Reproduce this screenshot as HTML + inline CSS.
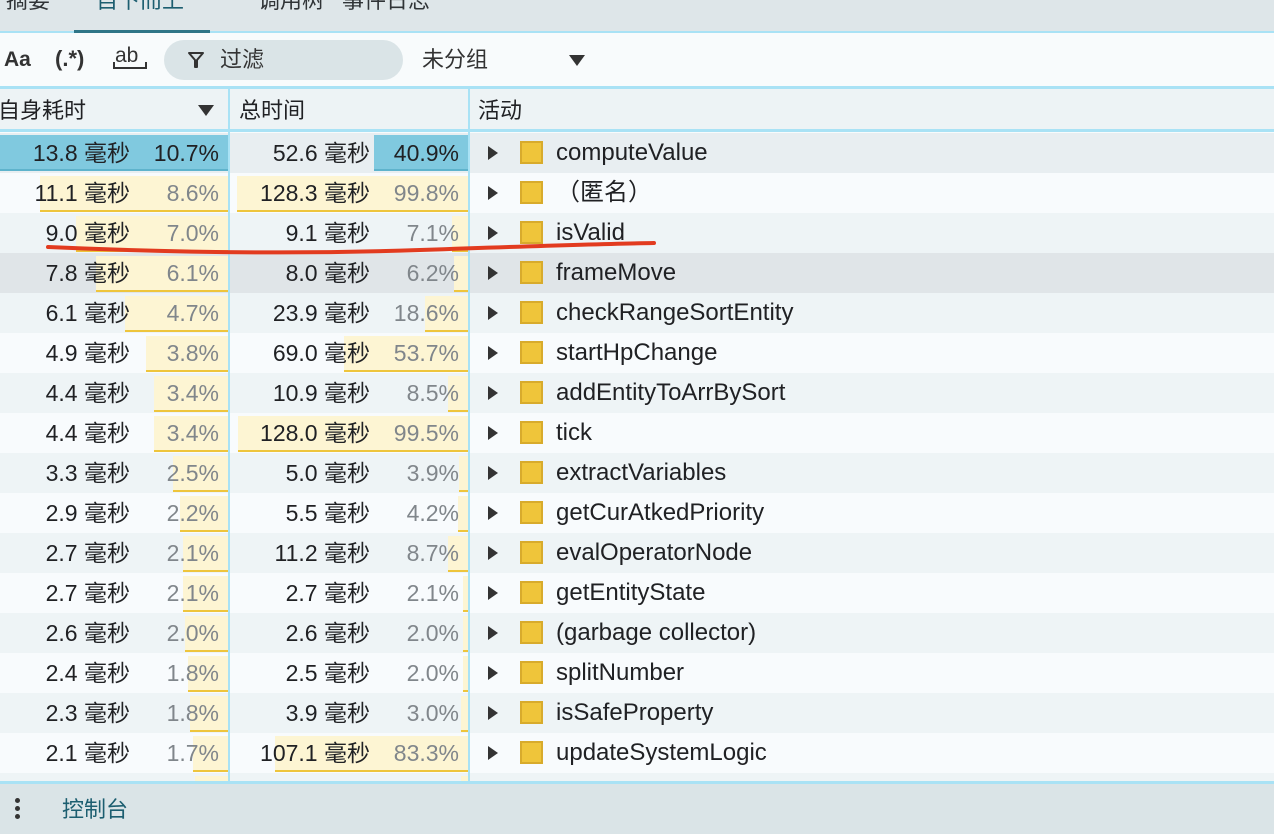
<!DOCTYPE html>
<html><head><meta charset="utf-8"><style>
*{box-sizing:border-box;margin:0;padding:0}
body{width:1274px;height:834px;overflow:hidden;background:#f8fbfc;font-family:"Liberation Sans","Noto Sans CJK SC",sans-serif;color:#202124;position:relative}
.tabs{position:absolute;left:0;top:0;width:1274px;height:33px;background:#dee6e9;border-bottom:2px solid #a9e2f5}
.tab{position:absolute;top:-14px;font-size:22px;line-height:30px;color:#303437}
.tb{position:absolute;top:35px;left:0;width:1274px;height:54px;background:#f8fbfc;border-bottom:3px solid #a9e2f5}
.hd{position:absolute;top:89px;left:0;width:1274px;height:43px;background:#edf3f5;border-bottom:3px solid #a9e2f5;font-size:22px;line-height:24px}
.row{position:absolute;left:0;width:1274px;height:40px;font-size:23px;line-height:24px}
.bar{position:absolute;top:3px;height:36px;background:#fdf5d3;border-bottom:2px solid #eec53c}
.t{position:absolute;top:8px;text-align:right;white-space:nowrap}
.p{color:#80868b}
.vd{position:absolute;top:89px;width:2px;height:692px;background:#a9e2f5}
.tri{position:absolute;left:488px;top:13px;width:0;height:0;border-left:10px solid #333;border-top:7px solid transparent;border-bottom:7px solid transparent}
.sq{position:absolute;left:520px;top:8px;width:23px;height:23px;background:#efc53a;border:2px solid #d8ab2c}
.nm{position:absolute;left:556px;top:8px;white-space:nowrap;font-size:24px}
.bot{position:absolute;left:0;top:781px;width:1274px;height:53px;background:#dae4e7;border-top:3px solid #a9e2f5}
</style></head><body>
<div class="tabs">
<div class="tab" style="left:6px">摘要</div>
<div class="tab" style="left:96px;color:#1c5e70">自下而上</div>
<div class="tab" style="left:258px">调用树</div>
<div class="tab" style="left:342px">事件日志</div>
<div style="position:absolute;left:74px;top:30px;width:136px;height:3px;background:#2f7587"></div>
</div>
<div class="tb">
<div style="position:absolute;left:4px;top:13px;font-size:21px;line-height:24px;font-weight:bold;color:#333">Aa</div>
<div style="position:absolute;left:55px;top:12px;font-size:22px;line-height:24px;font-weight:bold;color:#333">(.*)</div>
<div style="position:absolute;left:115px;top:9px;font-size:21px;line-height:24px;color:#333">ab</div>
<div style="position:absolute;left:113px;top:27px;width:34px;height:7px;border:2px solid #333;border-top:none"></div>
<div style="position:absolute;left:164px;top:5px;width:239px;height:40px;border-radius:20px;background:#dae4e7"></div>
<svg style="position:absolute;left:186px;top:15px" width="20" height="20" viewBox="0 0 20 20"><path d="M3 3H17L11 10V17H9V10Z" fill="none" stroke="#333" stroke-width="2" stroke-linejoin="round"/></svg>
<div style="position:absolute;left:220px;top:13px;font-size:22px;line-height:24px;color:#333">过滤</div>
<div style="position:absolute;left:422px;top:13px;font-size:22px;line-height:24px;color:#333">未分组</div>
<div style="position:absolute;left:569px;top:20px;border-top:11px solid #333;border-left:8px solid transparent;border-right:8px solid transparent"></div>
</div>
<div class="hd">
<div style="position:absolute;left:-2px;top:10px">自身耗时</div>
<div style="position:absolute;left:198px;top:16px;border-top:11px solid #333;border-left:8px solid transparent;border-right:8px solid transparent"></div>
<div style="position:absolute;left:239px;top:10px">总时间</div>
<div style="position:absolute;left:478px;top:10px">活动</div>
</div>
<div id="rows"></div>
<div class="vd" style="left:228px"></div>
<div class="vd" style="left:468px"></div>
<div class="bot">
<div style="position:absolute;left:15px;top:14px;width:5px;height:5px;border-radius:50%;background:#333;box-shadow:0 8px 0 #333,0 16px 0 #333"></div>
<div style="position:absolute;left:62px;top:14px;font-size:22px;line-height:24px;color:#1c5e70">控制台</div>
</div>
<svg style="position:absolute;left:0;top:0" width="1274" height="834"><path d="M48 247 Q 250 256 420 250 T 654 243" fill="none" stroke="#e23b1f" stroke-width="4" stroke-linecap="round"/></svg>
<script>
var d=[[13.8,10.7,52.6,40.9,"computeValue"],[11.1,8.6,128.3,99.8,"（匿名）"],[9.0,7.0,9.1,7.1,"isValid"],[7.8,6.1,8.0,6.2,"frameMove"],[6.1,4.7,23.9,18.6,"checkRangeSortEntity"],[4.9,3.8,69.0,53.7,"startHpChange"],[4.4,3.4,10.9,8.5,"addEntityToArrBySort"],[4.4,3.4,128.0,99.5,"tick"],[3.3,2.5,5.0,3.9,"extractVariables"],[2.9,2.2,5.5,4.2,"getCurAtkedPriority"],[2.7,2.1,11.2,8.7,"evalOperatorNode"],[2.7,2.1,2.7,2.1,"getEntityState"],[2.6,2.0,2.6,2.0,"(garbage collector)"],[2.4,1.8,2.5,2.0,"splitNumber"],[2.3,1.8,3.9,3.0,"isSafeProperty"],[2.1,1.7,107.1,83.3,"updateSystemLogic"],[2.0,1.6,4.0,3.1,""]];
var h="";
d.forEach(function(r,i){
var y=133+i*40;
var bg=i==0?"#e8eef1":i==3?"#e0e5e8":(i%2==0?"#eef4f6":"#f8fbfd");
h+='<div class="row" style="top:'+y+'px;background:'+bg+'">';
var w1=Math.round(r[0]/11.1*189);
var w2=Math.round(r[2]/128.3*231);
if(i==0){h+='<div class="bar" style="left:0;width:229px;top:2px;background:#80c9df;border-bottom:2px solid #5eb3cc"></div><div class="bar" style="left:374px;width:95px;top:2px;background:#80c9df;border-bottom:2px solid #5eb3cc"></div>';}
else{h+='<div class="bar" style="left:'+(229-w1)+'px;width:'+w1+'px"></div><div class="bar" style="left:'+(468-w2)+'px;width:'+w2+'px"></div>';}
var pc=i==0?'':' p';
h+='<div class="t" style="right:1144px">'+r[0].toFixed(1)+' 毫秒</div><div class="t'+pc+'" style="right:1055px">'+r[1].toFixed(1)+'%</div>';
h+='<div class="t" style="right:904px">'+r[2].toFixed(1)+' 毫秒</div><div class="t'+pc+'" style="right:815px">'+r[3].toFixed(1)+'%</div>';
if(r[4])h+='<div class="tri"></div><div class="sq"></div><div class="nm">'+r[4]+'</div>';
h+='</div>';});
document.getElementById("rows").innerHTML=h;
</script>
</body></html>
